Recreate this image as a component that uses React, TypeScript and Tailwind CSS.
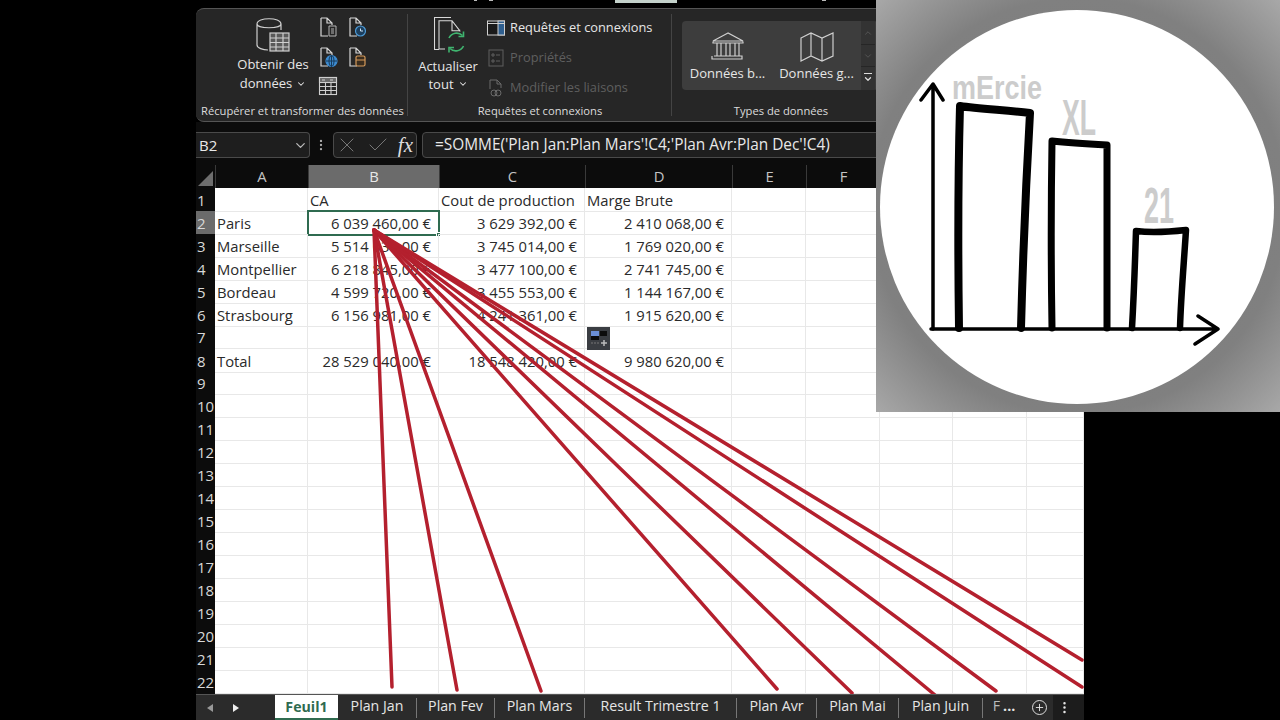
import { Check, ChevronDown, ChevronUp, MoreVertical, Plus, X } from "lucide-react"

const columns = ["A", "B", "C", "D", "E", "F", "", "", ""]

const rows: Record<number, string[]> = {
  1: ["", "CA", "Cout de production", "Marge Brute"],
  2: ["Paris", "6 039 460,00 €", "3 629 392,00 €", "2 410 068,00 €"],
  3: ["Marseille", "5 514 034,00 €", "3 745 014,00 €", "1 769 020,00 €"],
  4: ["Montpellier", "6 218 845,00 €", "3 477 100,00 €", "2 741 745,00 €"],
  5: ["Bordeau", "4 599 720,00 €", "3 455 553,00 €", "1 144 167,00 €"],
  6: ["Strasbourg", "6 156 981,00 €", "4 241 361,00 €", "1 915 620,00 €"],
  8: ["Total", "28 529 040,00 €", "18 548 420,00 €", "9 980 620,00 €"],
}

const tabs = [
  { label: "Plan Jan", w: "w-[79px]" },
  { label: "Plan Fev", w: "w-[78px]" },
  { label: "Plan Mars", w: "w-[90px]" },
  { label: "Result Trimestre 1", w: "w-[152px]" },
  { label: "Plan Avr", w: "w-[80px]" },
  { label: "Plan Mai", w: "w-[82px]" },
  { label: "Plan Juin", w: "w-[84px]" },
]

const redEnds = [
  [392, 687],
  [457, 690],
  [541, 691],
  [777, 689],
  [852, 693],
  [935, 695],
  [996, 691],
  [1082, 687],
  [1082, 660],
]

function DocIcon({ children }: { children?: React.ReactNode }) {
  return (
    <svg width="20" height="20" viewBox="0 0 20 20" fill="none" stroke="#d8d8d8" strokeWidth="1.200">
      <path d="M2 1h6l5 5v2M2 1v18h7M8 1v5h5" />
      {children}
    </svg>
  )
}

function SmallTable() {
  return (
    <svg width="20" height="20" viewBox="0 0 20 20" fill="none" stroke="#cfcfcf" strokeWidth="1.100">
      <rect x="1.500" y="1.500" width="17" height="17" />
      <rect x="1.500" y="1.500" width="17" height="5" fill="#6a6a6a" />
      <path d="M1.500 10.500h17M1.500 14.500h17M7.500 6.500v12M13 6.500v12M4 4h3M12 4h3" />
    </svg>
  )
}

function Divider() {
  return <div className="mt-[5px] h-[102px] w-px shrink-0 bg-[#444]" />
}

function Ribbon() {
  return (
    <div className="mt-2 flex h-[114px] overflow-hidden rounded-tl-lg rounded-bl-lg border-y border-[#555] bg-[#262626] text-[13px] text-[#e6e6e6]">
      {/* Récupérer */}
      <div className="flex w-[211px] flex-col pt-[8px]">
        <div className="flex h-[86px]">
          <div className="ml-[33px] flex w-[88px] flex-col items-center">
            <svg width="34" height="36" viewBox="0 0 34 36" fill="none" stroke="#cfcfcf" strokeWidth="1.200">
              <path d="M1 7c0-7 24-7 24 0v6M1 7c0 5 24 5 24 0M1 7v21c0 3 6 5 11 5" />
              <rect x="14" y="16" width="19" height="18" fill="#5a5a5a" />
              <path d="M14 21h19M14 25.500h19M14 30h19M20 16v18M27 16v18" />
            </svg>
            <div className="mt-[2px] text-center leading-[19px]">
              Obtenir des
              <div className="flex items-center justify-center gap-1">
                données <ChevronDown size={10} strokeWidth={2.500} />
              </div>
            </div>
          </div>
          <div className="ml-[2px] grid h-[79px] w-[58px] grid-cols-2 content-between self-start">
            <DocIcon>
              <path d="M10 9h7v10h-7zM12 12h3M12 14h3M12 16h3" stroke="#b5b5b5" strokeWidth="1" />
            </DocIcon>
            <DocIcon>
              <circle cx="12.500" cy="14" r="5" fill="#1c3f5e" stroke="#4d9ad6" />
              <path d="M12.500 11.500V14h2.500" stroke="#cfe4f5" strokeWidth="1" />
            </DocIcon>
            <DocIcon>
              <circle cx="12.500" cy="14" r="5.500" fill="#3d8bd0" stroke="#3d8bd0" />
              <path d="M7 14h11M12.500 8.500v11" stroke="#163a5a" strokeWidth="1" />
              <ellipse cx="12.500" cy="14" rx="2.500" ry="5.500" stroke="#163a5a" strokeWidth="1" />
            </DocIcon>
            <DocIcon>
              <rect x="8" y="9" width="9" height="10" rx="1.500" fill="#3a2d1e" stroke="#d59a5a" />
              <path d="M8 13h9" stroke="#d59a5a" />
            </DocIcon>
            <div className="-ml-[1px]">
              <SmallTable />
            </div>
          </div>
        </div>
        <div className="whitespace-nowrap pl-[5px] text-[11.200px] leading-[16px] text-[#dcdcdc]">
          Récupérer et transformer des données
        </div>
      </div>
      <Divider />

      {/* Requêtes */}
      <div className="flex w-[263px] flex-col pt-[8px]">
        <div className="flex h-[86px]">
          <div className="ml-[10px] flex w-[60px] flex-col items-center">
            <svg className="ml-[8px]" width="36" height="36" viewBox="0 0 36 36" fill="none" stroke="#d8d8d8" strokeWidth="1.100">
              <path d="M17 .5H.5v32H5" />
              <path d="M5 32V3.700h13l7.700 10v-1M18 3.700v10h7.700M5 32h6" />
              <path d="M15 21a8.500 8.500 0 0 1 13.500-2.500M29.500 29a8.500 8.500 0 0 1-13.500 2.500" stroke="#3fb46f" strokeWidth="1.600" />
              <path d="M29.500 14.500v5h-5M15 35.500v-5h5" stroke="#3fb46f" strokeWidth="1.600" />
            </svg>
            <div className="mt-[4px] text-center leading-[18px]">
              Actualiser
              <div className="flex items-center justify-center gap-1">
                tout <ChevronDown size={10} strokeWidth={2.500} />
              </div>
            </div>
          </div>
          <div className="ml-[9px] flex h-[82px] flex-col justify-between self-start whitespace-nowrap text-[12.800px]">
            <div className="flex h-[22px] items-center gap-[5px]">
              <svg width="18" height="16" viewBox="0 0 18 16" fill="none" stroke="#d0d0d0">
                <rect x="0.500" y="1" width="17" height="14" fill="#1a1a1a" />
                <rect x="11" y="1" width="6.500" height="14" fill="#2f5f8f" />
                <path d="M0.500 3.500h17" />
              </svg>
              Requêtes et connexions
            </div>
            <div className="flex h-[22px] items-center gap-[5px] text-[#5f5f5f]">
              <svg width="18" height="18" viewBox="0 0 18 18" fill="none" stroke="#5f5f5f">
                <rect x="2" y="1" width="14" height="16" />
                <path d="M5 5h2v2H5zM9 6h4M5 11h2v2H5zM9 12h4" />
              </svg>
              Propriétés
            </div>
            <div className="flex h-[22px] items-center gap-[5px] text-[#5f5f5f]">
              <svg width="18" height="18" viewBox="0 0 18 18" fill="none" stroke="#6a6a6a">
                <path d="M3 10V1h7l4 4v4M10 1v4h4" />
                <circle cx="7" cy="14" r="3" />
                <circle cx="11" cy="14" r="3" />
              </svg>
              Modifier les liaisons
            </div>
          </div>
        </div>
        <div className="pl-[1px] text-center text-[11.200px] leading-[16px] text-[#dcdcdc]">Requêtes et connexions</div>
      </div>
      <Divider />

      {/* Types de données */}
      <div className="flex flex-1 flex-col pt-[12px]">
        <div className="ml-[10px] flex h-[69px] w-[196px] overflow-hidden rounded-[4px] bg-[#3d3d3d]">
          <div className="flex w-[90px] flex-col items-center pl-[1px] pt-[11px]">
            <svg width="34" height="30" viewBox="0 0 34 30" fill="none" stroke="#cfcfcf" strokeWidth="1.200">
              <path d="M17 1 2 9h30zM2 9.500v1.500h30V9.500M6 11v13M10 11v13M15 11v13M19 11v13M24 11v13M28 11v13M3 24h28v3H1v-3" />
            </svg>
            <span className="mt-[2px] whitespace-nowrap">Données b...</span>
          </div>
          <div className="flex w-[89px] flex-col items-center pt-[11px]">
            <svg width="34" height="30" viewBox="0 0 34 30" fill="none" stroke="#cfcfcf" strokeWidth="1.200">
              <path d="m1 6 10-5 11 5 11-5v23l-11 5-11-5-10 5zM11 1v23M22 6v23" />
            </svg>
            <span className="mt-[2px] whitespace-nowrap">Données g...</span>
          </div>
          <div className="flex w-[14px] flex-col gap-px bg-[#262626] text-[#5a5a5a]">
            <div className="flex h-[23px] items-center justify-center bg-[#333]">
              <ChevronUp size={10} />
            </div>
            <div className="flex h-[21px] items-center justify-center bg-[#333]">
              <ChevronDown size={10} />
            </div>
            <div className="flex h-[23px] flex-col items-center justify-center bg-[#333] text-[#ddd]">
              <span className="h-px w-[8px] bg-[#ddd]" />
              <ChevronDown size={10} strokeWidth={3} />
            </div>
          </div>
        </div>
        <div className="mt-[13px] w-[218px] text-center text-[11.200px] leading-[16px] text-[#dcdcdc]">Types de données</div>
      </div>
    </div>
  )
}

function FormulaBar() {
  return (
    <div className="flex h-[43px] items-center bg-[#0c0c0c] pt-[3px] text-[15.400px] text-[#e8e8e8]">
      <div className="flex h-[26px] w-[114px] items-center justify-between rounded-r-[4px] border-y border-r border-[#4a4a4a] bg-[#1e1e1e] pl-[3px] pr-[1px] text-[15px]">
        B2
        <ChevronDown size={15} className="text-[#bbb]" />
      </div>
      <MoreVertical size={14} className="ml-[4px] text-[#aaa]" />
      <div className="ml-[5px] flex h-[26px] w-[84px] items-center justify-between rounded-[4px] border border-[#4a4a4a] bg-[#1e1e1e] pl-[1px] pr-[3px]">
        <X size={24} strokeWidth={1} className="text-[#777]" />
        <Check size={24} strokeWidth={1} className="text-[#777]" />
        <span className="font-['Liberation_Serif',serif] text-[21px] italic leading-none text-[#ddd]">fx</span>
      </div>
      <div className="ml-[5px] flex h-[26px] flex-1 items-center whitespace-nowrap rounded-l-[4px] border border-[#4a4a4a] bg-[#1e1e1e] pl-[12px]">
        =SOMME('Plan Jan:Plan Mars'!C4;'Plan Avr:Plan Dec'!C4)
      </div>
    </div>
  )
}

function Sheet() {
  const cols = "grid-cols-[19px_93px_131px_146px_147px_74px_74px_73px_74px_57px]"
  return (
    <div className="relative h-[529px] overflow-hidden bg-white text-[14.800px] text-[#2a2a2a]">
      <div className={`grid h-[23px] ${cols} bg-[#0c0c0c] text-[#c4c4c4]`}>
        <div className="flex items-end justify-end pb-[2px] pr-[2px]">
          <div className="h-0 w-0 border-b-[15px] border-l-[15px] border-b-[#6e6e6e] border-l-transparent" />
        </div>
        {columns.map((c, i) => (
          <div
            key={i}
            className={`flex items-center justify-center border-l border-[#3a3a3a] ${i === 1 ? "bg-[#6b6b6b] text-[#e8e8e8]" : ""}`}
          >
            {c}
          </div>
        ))}
      </div>
      {Array.from({ length: 22 }, (_, r) => {
        const n = r + 1
        const row = rows[n] ?? []
        return (
          <div key={n} className={`grid h-[23px] ${cols}`}>
            <div
              className={`flex items-center overflow-hidden pl-[1px] text-[15px] text-[#d8d8d8] ${n === 2 ? "bg-[#6b6b6b]" : "bg-[#0c0c0c]"}`}
            >
              {n}
            </div>
            {columns.map((_, c) => (
              <div
                key={c}
                className={`relative flex items-center whitespace-nowrap border-b border-r border-[#e8e8e8] pt-[1px] ${c === 1 && n === 2 ? "outline-2 -outline-offset-1 outline-[#2f6b50]" : ""} ${n > 1 && (c === 1 || c === 2 || c === 3) ? "justify-end pr-[7px]" : "pl-[2px]"}`}
              >
                {row[c]}
                {c === 1 && n === 2 && <span className="absolute -bottom-[3px] -right-[3px] h-[5px] w-[5px] border border-white bg-[#2f6b50]" />}
              </div>
            ))}
          </div>
        )
      })}

      <svg className="absolute left-0 top-0" width="888" height="529" viewBox="196 165 888 529" fill="none">
        {redEnds.map(([x, y], i) => (
          <line key={i} x1={374} y1={230} x2={x} y2={y} stroke="#b4202e" strokeWidth="3.500" strokeLinecap="round" />
        ))}
      </svg>

      <svg className="absolute left-[391px] top-[162px]" width="23" height="23" viewBox="0 0 23 23">
        <rect width="23" height="23" fill="#3a3d42" />
        <rect x="4" y="4" width="8" height="5" fill="#6b8fd6" />
        <rect x="13" y="4" width="7" height="5" fill="#0c0c0c" />
        <rect x="4" y="9" width="8" height="4" fill="#0c0c0c" />
        <path d="M4 16h8" stroke="#777" strokeDasharray="2 1" />
        <path d="M14 16h6M17 13v6" stroke="#bbb" strokeWidth="1.500" />
      </svg>
    </div>
  )
}

function Tabs() {
  return (
    <div className="flex h-[26px] items-center border-t border-[#555] bg-[#2b2b2b] text-[14.200px] text-[#e6e6e6]">
      <div className="flex w-[79px] items-center gap-[20px] pl-[11px]">
        <span className="h-0 w-0 border-y-[4px] border-r-[6px] border-y-transparent border-r-[#999]" />
        <span className="h-0 w-0 border-y-[4px] border-l-[6px] border-y-transparent border-l-[#eee]" />
      </div>
      <div className="flex h-[25px] w-[63px] items-center justify-center border-b-2 border-[#2f6b50] bg-white font-bold text-[#2f6b50]">
        Feuil1
      </div>
      {tabs.map((t) => (
        <div key={t.label} className={`flex h-[25px] ${t.w} items-center justify-center whitespace-nowrap`}>
          <span className="flex-1 pb-[3px] text-center">{t.label}</span>
          <span className="h-[20px] w-px bg-[#777]" />
        </div>
      ))}
      <div className="flex w-[42px] items-center justify-center gap-[3px] pb-[3px]">
        <span className="text-[#bbb]">F</span>
        <span className="font-bold">...</span>
      </div>
      <div className="flex w-[28px] justify-center">
        <span className="flex h-[15px] w-[15px] items-center justify-center rounded-full border border-[#ddd]">
          <Plus size={11} />
        </span>
      </div>
      <div className="flex h-full flex-1 items-center bg-[#1c1c1c] pl-[4px]">
        <MoreVertical size={15} />
      </div>
    </div>
  )
}

function Logo() {
  return (
    <div className="absolute right-0 top-0 h-[412px] w-[404px] bg-[radial-gradient(circle_at_50%_50%,#7f7f7f_60%,#808080_72%,#a8a8a8_100%)]">
      <svg width="404" height="412" viewBox="0 0 404 412" fill="none" stroke="#000" strokeLinecap="round" strokeLinejoin="round">
        <circle cx="201" cy="207" r="197" fill="#fff" stroke="none" />
        <g fill="#cccccc" stroke="none" fontFamily="'Liberation Sans', sans-serif" fontWeight="700">
          <text x="76" y="99" fontSize="33" textLength="90" lengthAdjust="spacingAndGlyphs">mErcie</text>
          <text x="186" y="135" fontSize="50" textLength="34" lengthAdjust="spacingAndGlyphs">XL</text>
          <text x="268" y="223" fontSize="50" textLength="30" lengthAdjust="spacingAndGlyphs">21</text>
        </g>
        <path d="M57 85v244M45 100l12-16 10 16" strokeWidth="3.500" />
        <path d="M55 329h287M322 316l20 13-23 15" strokeWidth="3.500" />
        <path d="M83 328c-1-70-1-150 1-222 18 3 45 4 70 7-4 70-7 140-9 215" strokeWidth="8" />
        <path d="M176 328c-1-60-1-125 0-187 18 2 36 3 55 4v183" strokeWidth="7" />
        <path d="M256 328c2-35 3-65 4-97 16 2 32 1 50-1-2 32-5 65-6 98" strokeWidth="6.500" />
      </svg>
    </div>
  )
}

export default function App() {
  return (
    <div className="relative flex h-[720px] w-[1280px] justify-start overflow-hidden bg-black font-['Open_Sans',sans-serif]">
      <div className="ml-[196px] w-[888px]">
        <div className="relative">
          <div className="absolute left-[419px] top-0 h-[3px] w-[62px] bg-[#c4d2cb]" />
          <div className="absolute left-[278px] top-0 h-[1px] w-[3px] bg-[#bbb]" />
          <div className="absolute left-[293px] top-0 h-[1px] w-[4px] bg-[#bbb]" />
          <div className="absolute left-[626px] top-0 h-[1px] w-[4px] bg-[#bbb]" />
        </div>
        <Ribbon />
        <FormulaBar />
        <Sheet />
        <Tabs />
      </div>
      <Logo />
    </div>
  )
}
